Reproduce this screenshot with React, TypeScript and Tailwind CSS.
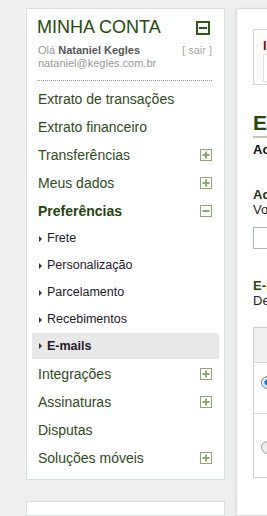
import { ReactNode } from 'react';

const PlusBox = () => (
  <svg width="12" height="12" viewBox="0 0 12 12" className="shrink-0">
    <rect x="0.5" y="0.5" width="11" height="11" fill="#fff" stroke="#8aa870" />
    <rect x="2.5" y="5" width="7" height="2" fill="#8aa870" />
    <rect x="5" y="2.5" width="2" height="7" fill="#8aa870" />
  </svg>
);

const MinusBox = () => (
  <svg width="12" height="12" viewBox="0 0 12 12" className="shrink-0">
    <rect x="0.5" y="0.5" width="11" height="11" fill="#fff" stroke="#8aa870" />
    <rect x="2.5" y="5" width="7" height="2" fill="#8aa870" />
  </svg>
);

const MenuItem = ({ label, bold, icon }: { label: string; bold?: boolean; icon?: ReactNode }) => (
  <div className="h-[28px] flex items-center justify-between pl-[11px] pr-[12px]">
    <span className={`text-[14px] ${bold ? 'font-bold text-[#24430f]' : 'text-[#2f4a1c]'}`}>{label}</span>
    {icon}
  </div>
);

const SubItem = ({ label, active }: { label: string; active?: boolean }) => (
  <div className={`flex items-center pl-[7px] ${active ? 'bg-[#e8e8e8] h-[26px] mb-[1px]' : 'h-[27px]'}`}>
    <span className="w-0 h-0 border-y-[3px] border-y-transparent border-l-[3px] border-l-[#333] mr-[5px]" />
    <span className={`text-[12.5px] text-[#1e1a2a] ${active ? 'font-bold' : ''}`}>{label}</span>
  </div>
);

export default function App() {
  return (
    <div className="w-[267px] h-[516px] overflow-hidden bg-[#efefef] font-['Liberation_Sans',Arial,sans-serif] flex gap-[11px] pt-[8px] pl-[26px]">
      {/* Sidebar */}
      <div className="w-[199px] shrink-0 flex flex-col gap-[21px]">
        <div className="bg-white border border-[#d6e2de] pb-[7px]">
          <div className="flex items-center justify-between pl-[10px] pr-[14px] pt-[9px] h-[27px]">
            <h1 className="text-[18px] leading-[18px] text-[#234a0c]">MINHA CONTA</h1>
            <svg width="14" height="14" viewBox="0 0 14 14" className="mt-[2px]">
              <rect x="1" y="1" width="12" height="12" fill="#fff" stroke="#2c5912" strokeWidth="2" />
              <rect x="3" y="6" width="8" height="2" fill="#2c5912" />
            </svg>
          </div>
          <div className="pl-[11px] pr-[12px] mt-[8px] text-[11px] leading-[13px]">
            <div className="flex justify-between">
              <span className="text-[#999]">
                Olá <span className="font-bold text-[#555]">Nataniel Kegles</span>
              </span>
              <span className="text-[#aaa]">[ sair ]</span>
            </div>
            <div className="text-[#999]">nataniel@kegles.com.br</div>
          </div>
          <div className="ml-[10px] mr-[12px] mt-[10px] border-t border-dotted border-[#999]" />
          <div className="mt-[4px]">
            <MenuItem label="Extrato de transações" />
            <MenuItem label="Extrato financeiro" />
            <MenuItem label="Transferências" icon={<PlusBox />} />
            <MenuItem label="Meus dados" icon={<PlusBox />} />
            <MenuItem label="Preferências" bold icon={<MinusBox />} />
            <div className="mx-[5px]">
              <SubItem label="Frete" />
              <SubItem label="Personalização" />
              <SubItem label="Parcelamento" />
              <SubItem label="Recebimentos" />
              <SubItem label="E-mails" active />
            </div>
            <MenuItem label="Integrações" icon={<PlusBox />} />
            <MenuItem label="Assinaturas" icon={<PlusBox />} />
            <MenuItem label="Disputas" />
            <MenuItem label="Soluções móveis" icon={<PlusBox />} />
          </div>
        </div>
        <div className="bg-white border border-[#d6e2de] h-[40px]" />
      </div>

      {/* Main content */}
      <div className="flex-1 min-w-[300px] bg-white border border-[#dcdcdc] shadow-[-1px_0_2px_rgba(0,0,0,0.06)] pl-[16px] pt-[20px] whitespace-nowrap">
        <div className="w-[260px] h-[56px] border border-[#d4d4d4] bg-[#fbfbfb] pl-[9px] pt-[9px]">
          <div className="text-[13px] font-bold text-[#8b0d0d] leading-[14px]">Importante</div>
          <div className="mt-[1px] h-[28px] border border-[#e2e2e2] bg-white" />
        </div>
        <div className="mt-[26px] w-[260px] border-b-2 border-[#b9c7ab] pb-[1px]">
          <h2 className="text-[21px] leading-[24px] font-bold text-[#234a0c]">E-mails</h2>
        </div>
        <div className="mt-[4px] text-[13px] leading-[15px] font-bold text-[#111]">Acompanhe suas notificações</div>
        <div className="mt-[30px] text-[13px] leading-[15px] font-bold text-[#1f3a10]">Adicionar e-mail</div>
        <div className="text-[13px] leading-[15px] text-[#222]">Você pode cadastrar</div>
        <div className="mt-[10px] w-[200px] h-[22px] border border-[#aab2bd] bg-white" />
        <div className="mt-[29px] text-[13px] leading-[15px] font-bold text-[#234a0c]">E-mail principal</div>
        <div className="text-[13px] leading-[15px] text-[#222]">Defina o e-mail</div>
        <div className="mt-[19px] w-[260px] border border-[#d0d0d0]">
          <div className="h-[35px] bg-[#eeeeee] border-b border-[#dadada]" />
          <div className="h-[51px] border-b border-[#dadada] pl-[7px] pt-[13px]">
            <span className="block w-[13px] h-[13px] rounded-full border border-[#6b7f94] bg-[radial-gradient(circle,#2a7ad0_0,#2a7ad0_35%,#e8eef5_45%)]" />
          </div>
          <div className="h-[63px] pl-[7px] pt-[27px]">
            <span className="block w-[13px] h-[13px] rounded-full border border-[#999] bg-[#eee]" />
          </div>
        </div>
      </div>
    </div>
  );
}
